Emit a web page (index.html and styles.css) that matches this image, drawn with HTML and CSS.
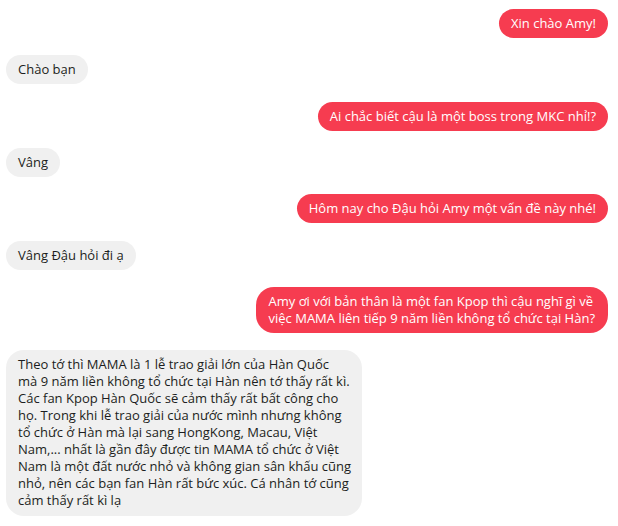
FILE: index.html
```html
<!DOCTYPE html>
<html lang="vi"><head><meta charset="utf-8"><title>Chat</title><link rel="stylesheet" href="styles.css"></head>
<body>
<div class="chat">
  <div class="msg out">Xin chào Amy!</div>
  <div class="msg in">Chào bạn</div>
  <div class="msg out">Ai chắc biết cậu là một boss trong MKC nhỉ!?</div>
  <div class="msg in">Vâng</div>
  <div class="msg out">Hôm nay cho Đậu hỏi Amy một vấn đề này nhé!</div>
  <div class="msg in">Vâng Đậu hỏi đi ạ</div>
  <div class="msg out multi">Amy ơi với bản thân là một fan Kpop thì cậu nghĩ gì về<br>việc MAMA liên tiếp 9 năm liền không tổ chức tại Hàn?</div>
  <div class="msg in multi">Theo tớ thì MAMA là 1 lễ trao giải lớn của Hàn Quốc<br>mà 9 năm liền không tổ chức tại Hàn nên tớ thấy rất kì.<br>Các fan Kpop Hàn Quốc sẽ cảm thấy rất bất công cho<br>họ. Trong khi lễ trao giải của nước mình nhưng không<br>tổ chức ở Hàn mà lại sang HongKong, Macau, Việt<br>Nam,... nhất là gần đây được tin MAMA tổ chức ở Việt<br>Nam là một đất nước nhỏ và không gian sân khấu cũng<br>nhỏ, nên các bạn fan Hàn rất bức xúc. Cá nhân tớ cũng<br>cảm thấy rất kì lạ</div>
</div>
</body></html>
```
FILE: styles.css
```css
html, body { margin: 0; padding: 0; background: #ffffff; }
body { font-family: "Open Sans", "Noto Sans", sans-serif; font-size: 13px; }
.chat {
  display: flex;
  flex-direction: column;
  align-items: flex-start;
  gap: 17.33px;
  padding: 9px 10px 0 6px;
}
.msg {
  line-height: 17px;
  padding: 6px 12px;
  border-radius: 15px;
  white-space: nowrap;
}
.msg.out {
  align-self: flex-end;
  background: #f63c50;
  color: #ffffff;
}
.msg.in {
  background: #f0f0f0;
  color: #1c1e21;
}
.msg.multi { border-radius: 18px; padding: 6px 13px; }
.msg.in.multi { padding: 6px 11px 7px 12px; }
```
